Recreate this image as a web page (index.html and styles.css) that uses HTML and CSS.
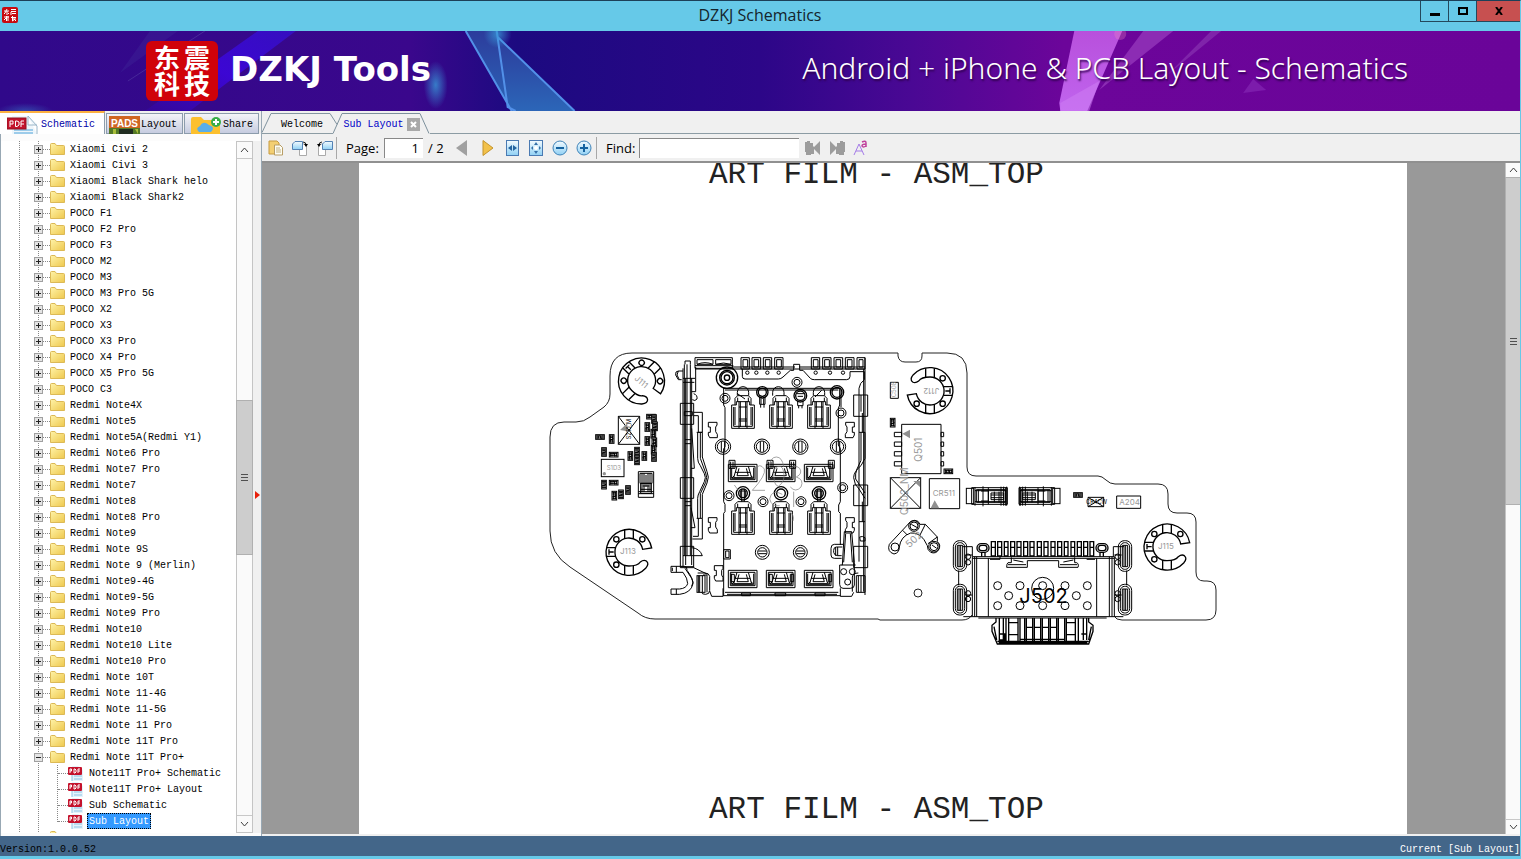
FILE: index.html
```html
<!DOCTYPE html>
<html lang="en">
<head>
    <meta charset="UTF-8">
    <meta name="viewport" content="width=device-width, initial-scale=1.0">
    <title>DZKJ Schematics</title>
    <link rel="stylesheet" href="styles.css">
</head>
<body>

<!-- shared icons -->
<svg class="defs" aria-hidden="true">
    <defs>
        <linearGradient id="gold" x1="0" y1="0" x2="1" y2="1">
            <stop offset="0" stop-color="#fff3a8"/><stop offset="1" stop-color="#eec84e"/>
        </linearGradient>
        <linearGradient id="sky" x1="0" y1="0" x2="0" y2="1">
            <stop offset="0" stop-color="#f4fbff"/><stop offset="1" stop-color="#8fd0f4"/>
        </linearGradient>
    </defs>
    <symbol id="folder" viewBox="0 0 15 12">
        <path d="M.5 11.500V1.500Q.5.500 1.500.500H5L6.500 2.500H13.500Q14.500 2.500 14.500 3.500V11.500Z" fill="url(#gold)" stroke="#dcb956"/>
    </symbol>
    <symbol id="pdf" viewBox="0 0 16 15">
        <path d="M4 0H10L15 4V15H4Z" fill="#e4f2fb"/>
        <path d="M4 9V15M6 10H14M6 13H14" stroke="#8cc4e4"/>
        <rect y="1" width="14" height="8" rx="1" fill="#c4122c"/>
        <path d="M2 7V3H3.500V5H2M6 3H7L8 4V6L7 7H6ZM10 7V3H12M10 5H12" fill="none" stroke="#fff"/>
    </symbol>
</svg>

<div class="window">
    <div class="titlebar">
        <svg class="app-icon" viewBox="0 0 16 16">
            <rect width="16" height="16" rx="2" fill="#c80a10"/>
            <path d="M2 4H7M5 2L3 6M5 4V8M2 7L3 6M7 7L6 6M9 2.500H14M9 4.500H14M10 6.500H14M9 8V5M2 10H7M4.500 9V14M2 13L4 11M6 9V14M9 10.500H14M10.500 9V14M11 12H14M13 12L10.500 14M12 12L14 14" stroke="#fff" fill="none"/>
        </svg>
        <h1>DZKJ Schematics</h1>
        <div class="window-buttons">
            <button type="button" aria-label="Minimize"><svg width="10" height="10"><path d="M0 7H10V10H0Z"/></svg></button>
            <button type="button" aria-label="Maximize"><svg width="10" height="8"><path d="M1 1H9V7H1Z" fill="none" stroke="#000" stroke-width="2"/></svg></button>
            <button type="button" class="close" aria-label="Close"><svg width="10" height="8"><path d="M2 0L8 8M8 0L2 8" stroke="#000" stroke-width="2"/></svg></button>
        </div>
    </div>

    <header class="banner">
        <svg class="banner-art" viewBox="0 0 1521 80" preserveAspectRatio="none" aria-hidden="true">
            <defs>
                <linearGradient id="base">
                    <stop offset="0" stop-color="#30098a"/><stop offset=".27" stop-color="#3a078c"/>
                    <stop offset=".34" stop-color="#1c0a80"/><stop offset=".5" stop-color="#2c0688"/>
                    <stop offset=".6" stop-color="#4a0894"/><stop offset=".7" stop-color="#6c059a"/>
                    <stop offset="1" stop-color="#6a0499"/>
                </linearGradient>
                <linearGradient id="beam" x1="1" y1="0" x2="0" y2="1">
                    <stop offset="0" stop-color="#3510c8"/><stop offset=".5" stop-color="#3d06e0"/><stop offset="1" stop-color="#34089a"/>
                </linearGradient>
                <linearGradient id="glass" x1="0" y1="0" x2="0" y2="1">
                    <stop offset="0" stop-color="#2c3c9c"/><stop offset="1" stop-color="#2c66b8"/>
                </linearGradient>
                <linearGradient id="pink" x1="0" y1="0" x2="0" y2="1">
                    <stop offset="0" stop-color="#b850dc"/><stop offset="1" stop-color="#c064ee"/>
                </linearGradient>
                <radialGradient id="glow">
                    <stop offset="0" stop-color="#3898d8" stop-opacity=".8"/><stop offset="1" stop-color="#3898d8" stop-opacity="0"/>
                </radialGradient>
            </defs>
            <rect width="1521" height="80" fill="url(#base)"/>
            <path d="M258 0H296L190 80H145Z" fill="url(#beam)" opacity=".85"/>
            <path d="M150 0H178L120 42Z" fill="#44389e" opacity=".25"/>
            <path d="M205 0L128 50" stroke="#5a48a8" opacity=".5"/>
            <ellipse cx="436" cy="54" rx="12" ry="24" fill="url(#glow)"/>
            <ellipse cx="25" cy="80" rx="28" ry="8" fill="url(#glow)" opacity=".5"/>
            <path d="M466 0H498L508 76L512 80Z" fill="url(#glass)"/>
            <path d="M498 6L575 80H512L508 76Z" fill="url(#glass)"/>
            <path d="M466 0L512 80M497 0L508 76L516 80M498 6L575 80" fill="none" stroke="#5290e8" stroke-width="2"/>
            <circle cx="498" cy="3" r="14" fill="url(#glow)"/>
            <path d="M1075 0H1123L1088 80H1061L1060 72Z" fill="url(#pink)"/>
            <path d="M1061 72L1100 50L1090 80H1061Z" fill="#d080f4" opacity=".5"/>
            <path d="M1144 0H1174L1100 59Z" fill="#8c2cb4"/>
            <path d="M1212 0H1222L1168 44Z" fill="#842cae" opacity=".8"/>
            <path d="M1244 62L1254 48L1267 59Z" fill="#7c1cab"/>
            <circle cx="1121" cy="3" r="6" fill="#f088c0" opacity=".3"/>
        </svg>
        <svg class="brand-logo" viewBox="0 0 72 60">
            <rect width="72" height="60" rx="6" fill="#d0020a"/>
            <text x="8" y="27">东</text><text x="38" y="27">震</text>
            <text x="8" y="53">科</text><text x="38" y="53">技</text>
        </svg>
        <span class="brand-name">DZKJ Tools</span>
        <span class="tagline">Android + iPhone &amp; PCB Layout - Schematics</span>
    </header>

    <main class="main">
        <aside class="sidebar">
            <nav class="side-tabs">
                <button type="button" class="side-tab active">
                    <svg width="34" height="18" viewBox="0 0 34 18">
                        <path d="M5 0H21L30 8V18H5Z" fill="#eef6fb"/><path d="M21 0L30 10V18M21 0V9H30" fill="#fff" stroke="#9ab6c8"/>
                        <path d="M7 14H26M7 17H26" stroke="#9dccea" stroke-width="2"/>
                        <rect y="2" width="19" height="11" fill="#c4122c" stroke="#901020"/>
                        <path d="M3 11V5H6V8H3M8.500 5H10L12 6V9L10 10.500H8.500ZM14 11V5H17M14 8H17" fill="none" stroke="#fff"/>
                    </svg>Schematic</button>
                <button type="button" class="side-tab">
                    <svg width="32" height="18" viewBox="0 0 32 18">
                        <rect width="31" height="18" fill="#cf6622"/><path d="M0 12H31V18H0Z" fill="#547a26"/>
                        <path d="M10 13H24V18H10Z" fill="#202c20"/><path d="M4 13H7V18H4M26 13H29V18" fill="#a7bd3a"/>
                        <text class="pads" x="2" y="11">PADS</text>
                    </svg>Layout</button>
                <button type="button" class="side-tab">
                    <svg width="34" height="18" viewBox="0 0 34 18">
                        <path d="M2 18V3Q2 1 4 1H12L15 4H28Q31 4 31 7V18Z" fill="#fcc02e"/>
                        <path d="M10 16Q6 12 11 10Q14 4 20 9Q27 11 22 16Z" fill="#5aaee8"/>
                        <circle cx="27" cy="6" r="5" fill="#38ad48"/><path d="M24 6H30M27 3V9" stroke="#fff" stroke-width="2"/>
                    </svg>Share</button>
            </nav>
            <div class="tree-wrap">
                <ul class="tree" id="tree"></ul>
                <div class="scrollbar tree-scroll">
                    <button type="button" aria-label="Scroll up"><svg width="9" height="6"><path d="M1 5L4.500 1L8 5"/></svg></button>
                    <div class="track"><div class="thumb"><i></i></div></div>
                    <button type="button" aria-label="Scroll down"><svg width="9" height="6"><path d="M1 1L4.500 5L8 1"/></svg></button>
                </div>
                <div class="splitter"><svg width="5" height="8"><path d="M0 0L5 4L0 8Z" fill="#e8200c"/></svg></div>
            </div>
        </aside>

        <section class="content">
            <nav class="doc-tabs">
                <button type="button" class="doc-tab">
                    <svg class="tab-shape" viewBox="0 0 76 21" preserveAspectRatio="none"><path d="M0 20.500L9 .500H68L75 12"/></svg>Welcome
                </button>
                <div class="doc-tab current">
                    <svg class="tab-shape" viewBox="0 0 97 21" preserveAspectRatio="none"><path d="M0 20.500L9 .500H87L96 20.500"/></svg>
                    <button type="button">Sub Layout</button>
                    <button type="button" class="tab-close" aria-label="Close tab"><svg width="7" height="7"><path d="M1 1L6 6M6 1L1 6" stroke="#fff" stroke-width="2"/></svg></button>
                </div>
            </nav>

            <div class="toolbar">
                <button type="button" aria-label="Open"><svg width="16" height="16"><path d="M1 1H9L11 3V14H1Z" fill="#f3cf72" stroke="#c79b40"/><path d="M6.500 5H12L14.500 7.500V15H6.500Z" fill="#fdfdf4" stroke="#b89d66"/><path d="M8 8H12M8 10H13M8 12H13" stroke="#c0b080"/></svg></button>
                <button type="button" aria-label="Rotate right"><svg width="17" height="16"><path d="M8 4H14.500V15.500H7.500V9" fill="#fff" stroke="#aaa"/><path d="M3 1.500H10.500V9.500H.5V4Z" fill="url(#sky)" stroke="#5482b4"/><path d="M11 2Q14 2 14 5" fill="none" stroke="#222"/><path d="M12 4H16L14 7Z"/></svg></button>
                <button type="button" aria-label="Rotate left"><svg width="17" height="16"><path d="M9 4H2.500V15.500H9.500V9" fill="#fff" stroke="#aaa"/><path d="M9 1.500H16.500V9.500H6.500V4Z" fill="url(#sky)" stroke="#5482b4"/><path d="M6 2Q3 2 3 5" fill="none" stroke="#222"/><path d="M1 4H5L3 7Z"/></svg></button>
                <span class="sep"></span>
                <label class="page-label" for="page">Page:</label>
                <input type="text" id="page" class="page-input" value="1">
                <span class="page-total">/ 2</span>
                <button type="button" aria-label="Previous page"><svg width="12" height="16"><path d="M11 0V16L0 8Z" fill="#a0a0a0"/></svg></button>
                <button type="button" class="next" aria-label="Next page"><svg width="12" height="16"><path d="M1 .500V15.500L11 8Z" fill="#f2c14a" stroke="#c4942c"/></svg></button>
                <button type="button" aria-label="Fit width"><svg width="13" height="16"><rect x=".5" y=".5" width="12" height="15" fill="url(#sky)" stroke="#4a7ab2"/><path d="M6 5V11L2 8ZM7 5V11L11 8Z" fill="#2464a0"/></svg></button>
                <button type="button" aria-label="Fit page"><svg width="14" height="16"><rect x=".5" y=".5" width="13" height="15" fill="url(#sky)" stroke="#4a7ab2"/><path d="M7 2L9 5H5ZM7 14L9 11H5ZM2 8L4 6V10ZM12 8L10 6V10Z" fill="#3470a8"/><circle cx="7" cy="8" r="2" fill="#fff"/></svg></button>
                <button type="button" aria-label="Zoom out"><svg width="16" height="16"><circle cx="8" cy="8" r="7" fill="url(#sky)" stroke="#3f83b8"/><path d="M4 8H12" stroke="#1663a0" stroke-width="2"/></svg></button>
                <button type="button" aria-label="Zoom in"><svg width="16" height="16"><circle cx="8" cy="8" r="7" fill="url(#sky)" stroke="#3f83b8"/><path d="M4 8H12M8 4V12" stroke="#1663a0" stroke-width="2"/></svg></button>
                <span class="sep"></span>
                <label class="find-label" for="find">Find:</label>
                <input type="text" id="find" class="find-input">
                <button type="button" class="next" aria-label="Find previous"><svg width="16" height="16"><path d="M0 2H2V1H5V3H8V6L9 7L15 1V15L9 9V14H6V15H1V12H0Z" fill="#9c9c9c"/></svg></button>
                <button type="button" aria-label="Find next"><svg width="16" height="16"><path d="M16 2H14V1H11V3H8V6L7 7L1 1V15L7 9V14H10V15H15V12H16Z" fill="#9c9c9c"/></svg></button>
                <button type="button" aria-label="Match case"><svg width="16" height="16"><path d="M1 15L6 4L11 15M3 11H9" fill="none" stroke="#a57ce8" stroke-width="1"/><path d="M9 2Q13 0 13 3V7M13 4Q9 4 9 6Q10 8 13 6" fill="none" stroke="#c0409c" stroke-width="1.500"/></svg></button>
            </div>

            <div class="viewer">
                <div class="canvas">
                    <!-- drawing units: one per page pixel; parts use a grid three times finer -->
                    <svg class="sheet" viewBox="359 163 1048 671" preserveAspectRatio="xMidYMid slice">
                        <defs>
                            <g id="ring">
                                <path d="M68 -12A69 69 0 1 0 50 49Q62 35 52 27Q44 22 34 30Q26 42 0 42A42 42 0 1 1 41 -8Z"/>
                                <path d="M-13 -68V-40M13 -68V-40M-13 68V40M13 68V40M-67 -13H-41M-67 13H-41M-60 -8V8M-60 0H-46"/>
                                <circle cx="-38" cy="-38" r="8"/><circle cx="40" cy="-38" r="8"/><circle cx="-38" cy="38" r="8"/>
                            </g>
                            <g id="clip">
                                <path d="M0 10H14V0H54V10H68V80H0ZM6 16V74H62V16M10 16V70M58 16V70M22 0V80M26 0V76M46 0V80M42 0V76M22 16H46M22 52H46M22 58H46"/>
                                <path d="M10 10V-10L18 -18H50L58 -10V10M18 0V-12M50 0V-12"/>
                            </g>
                            <g id="tray">
                                <path d="M0 0H86V52H0ZM6 6H80V46H6ZM10 10V42H76V10M26 6L16 40H70L60 6M32 12L26 34H60L54 12M10 42L18 34M76 42L68 34M20 24H66" />
                            </g>
                            <g id="pad"><circle r="23"/><circle r="17"/><path d="M-5 -15V15M5 -15V15"/></g>
                            <g id="eye"><circle r="15"/><circle r="9"/></g>
                            <g id="chip"><rect width="26" height="14"/><path d="M4 1V13M8 2V12M12 1L17 13M16 2V12M22 1V13M2 4H24M2 10H24"/></g>
                            <g id="slot"><rect width="40" height="92" rx="18"/><rect x="6" y="6" width="28" height="80" rx="13"/><path d="M12 14H28V78H12ZM17 14V78M22 14V78"/></g>
                            <g id="diode"><rect width="22" height="46"/><path d="M16 -2H123V48H16ZM26 -4V52M30 4H117V42H30ZM36 4V42M44 8H66V38H44M50 -6V54M66 -2V48M74 14H112V34H74ZM74 20H112M74 28H112M84 10V42M104 -5V52M98 10V42M112 -5V52M118 -2V52M121 -5V52M26 7H120M26 40H120"/></g>
                        </defs>

                        <g class="film">
                            <text x="709" y="183">ART FILM - ASM_TOP</text>
                            <text x="709" y="818">ART FILM - ASM_TOP</text>
                        </g>

                        <path class="outline" d="M972 615Q969 620 962 620H880L878 619H655Q645 619 638 613L570 567Q550 554 550 531V437Q550 422 564 422H576Q584 422 590 417L604 407Q610 402 610 394V376Q610 353 632 353H898V356Q899 362 905 362H916Q922 362 922 356V353H947Q967 353 967 373V467Q967 476 976 476H1098Q1102 476 1106 480Q1110 484 1115 484H1158Q1168 484 1168 494V504Q1168 513 1177 513H1187Q1196 513 1196 522V572Q1196 581 1204 581H1207Q1216 581 1216 590V610Q1216 620 1206 620H1122Q1116 620 1114 616"/>

                        <!-- left part of the board -->
                        <svg x="540" y="340" width="180" height="290" viewBox="0 0 540 870">
                            <g class="line bold">
                                <use href="#ring" transform="translate(305 122) rotate(45)"/>
                                <use href="#ring" transform="translate(267 636)"/>
                            </g>
                            <g class="line">
                                <path d="M235 229H299V313H235ZM235 229L299 313M299 229L235 313"/>
                                <rect x="184" y="358" width="68" height="52"/>
                                <path d="M295 395H341V472H295ZM300 400H336V430H300ZM306 400V456M312 400V456M318 405V440M324 400V456M330 400V456M302 430H334V460H302ZM302 448H334M295 455H341M295 461H341M308 438H328"/>
                            </g>
                            <path class="tint" d="M240 270L262 250V274Z"/><circle class="tint" cx="193" cy="401" r="5"/>
                            <g class="chips">
                                <use href="#chip" x="167" y="284"/><use href="#chip" x="208" y="337"/><use href="#chip" x="208" y="421"/><use href="#chip" x="320" y="223"/>
                                <use href="#chip" transform="translate(222 284) rotate(90)"/><use href="#chip" transform="translate(199 323) rotate(90)"/>
                                <use href="#chip" transform="translate(199 421) rotate(90)"/><use href="#chip" transform="translate(230 454) rotate(90)"/>
                                <use href="#chip" transform="translate(250 450) rotate(90)"/><use href="#chip" transform="translate(271 437) rotate(90)"/>
                                <use href="#chip" transform="translate(329 248) rotate(90)"/><use href="#chip" transform="translate(329 290) rotate(90)"/>
                                <use href="#chip" transform="translate(278 335) rotate(90)"/><use href="#chip" transform="translate(320 335) rotate(90)"/>
                                <use href="#chip" transform="translate(349 224) rotate(90)"/><use href="#chip" transform="translate(352 246) rotate(90)"/>
                                <use href="#chip" transform="translate(347 268) rotate(90)"/><use href="#chip" transform="translate(350 294) rotate(90)"/>
                                <use href="#chip" transform="translate(348 316) rotate(90)"/><use href="#chip" transform="translate(349 338) rotate(90)"/>
                                <use href="#chip" transform="translate(298 322) rotate(90)"/><use href="#chip" transform="translate(298 348) rotate(90)"/>
                            </g>
                            <g class="mark">
                                <text x="282" y="118" transform="rotate(40 282 118)">J111</text>
                                <text x="240" y="643">J113</text>
                                <text x="200" y="391" class="tiny">S1D3</text>
                            </g>
                            <text class="ink" x="272" y="298" transform="rotate(-90 272 298)">S210_M</text>
                        </svg>

                        <!-- card connector -->
                        <svg x="665" y="345" width="220" height="260" viewBox="0 0 660 780">
                            <g class="line">
                                <path d="M60 58V48H76V58M54 70V665M58 58V632M62 100V660M66 58V632M76 58V632M80 100V660M92 66V140H80M46 665H86M54 78H40Q30 78 32 90L40 104H50M40 78L36 90L42 102M86 146Q98 150 96 162Q90 170 82 164M54 100H90M54 112H88M54 632H80L112 632Q104 610 80 608"/>
                                <path d="M46 175H86V238H46ZM46 398H86V460H46ZM46 604H86V668H46ZM58 200H82V212H58ZM80 250L88 370H78M78 488L90 548H78M60 284H78M60 296H78M60 470H78M60 482H78"/>
                                <path d="M86 202H112V262H100V212H86M98 262V340Q98 352 106 362L118 386Q124 398 118 410L104 440Q98 450 98 460V520M112 262V336L126 380Q134 396 126 414L112 448V520M106 262V340L122 384Q128 396 122 412L106 446V520M95 262H112M95 520H112V582H82M100 520V574H84"/>
                                <path d="M90 38H202V70H90ZM96 44H144V58H96ZM152 44H198V58H152ZM96 58Q120 48 144 58M152 58Q176 50 198 58M90 72H600M90 62H205M200 66H390M402 66H600"/>
                                <path d="M228 38H253V72H228ZM234 44H248V66H234ZM261 38H287V72H261ZM267 44H281V66H267ZM295 38H320V72H295ZM301 44H315V66H301ZM329 38H354V72H329ZM335 44H349V66H335ZM439 38H464V72H439ZM445 44H459V66H445ZM473 38H498V72H473ZM479 44H493V66H479ZM507 38H533V72H507ZM513 44H527V66H513ZM541 38H567V72H541ZM547 44H561V66H547ZM576 38H600V72H576ZM582 44H594V66H582Z"/>
                                <path d="M232 72V94Q232 102 240 102H340Q348 102 354 96L376 76H386V58H404V76H414L436 100Q440 104 448 104H545Q555 104 555 94V80H598V104Q584 114 582 130V650M174 130H526M180 135H520M176 130V180L180 188V305L176 312V470L180 478V500L176 505V752M524 130V180L520 190V300L526 310V470L521 480V500L526 505V600M528 135V186M174 752H526M180 742H520M186 748H516M174 730V754M526 730V754"/>
                                <circle cx="247" cy="83" r="5"/><circle cx="274" cy="83" r="5"/><circle cx="307" cy="83" r="5"/><circle cx="341" cy="83" r="5"/><circle cx="452" cy="83" r="5"/><circle cx="495" cy="83" r="5"/><circle cx="534" cy="83" r="5"/>
                                <use href="#eye" x="396" y="112"/><use href="#eye" x="180" y="160"/><use href="#eye" x="528" y="204"/><use href="#eye" x="192" y="452"/><use href="#eye" x="294" y="470"/><use href="#eye" x="408" y="470"/><use href="#eye" x="533" y="428"/>
                                <path d="M217 152V142A17 17 0 0 1 251 142V152M323 152V142A17 17 0 0 1 357 142V152M445 152V142A17 17 0 0 1 479 142V152"/>
                                <path d="M284 156V178H300V156M287 178V188M297 178V188M288 160V178M296 160V178M398 166V182H414V166M401 182V190M411 182V190M395 146H417M398 154H414M216 145L240 162M470 136L450 156"/>
                                <path d="M226 438H242V458H226ZM454 438H470V458H454ZM230 435V470M238 435V470M458 435V470M466 435V470"/>
                                <use href="#clip" x="200" y="170"/><use href="#clip" x="314" y="170"/><use href="#clip" x="428" y="170"/>
                                <use href="#clip" x="200" y="488"/><use href="#clip" x="314" y="488"/><use href="#clip" x="428" y="488"/>
                                <use href="#tray" x="190" y="358"/><use href="#tray" x="304" y="358"/><use href="#tray" x="418" y="358"/>
                                <use href="#tray" x="190" y="676"/><use href="#tray" x="304" y="676"/><use href="#tray" x="418" y="676"/>
                                <path d="M192 346H210V370H192ZM197 350V370M204 350V370M306 346H324V370H306ZM311 350V370M318 350V370M374 346H392V370H374ZM379 350V370M386 350V370M490 346H508V370H490ZM495 350V370M502 350V370M198 688H208V710H198ZM312 688H322V710H312ZM376 688H386V710H376ZM490 688H500V710H490Z"/>
                                <use href="#pad" x="174" y="305"/><use href="#pad" x="291" y="305"/><use href="#pad" x="406" y="305"/><use href="#pad" x="519" y="305"/>
                                <circle cx="292" cy="622" r="21"/><circle cx="292" cy="622" r="14"/><circle cx="406" cy="622" r="21"/><circle cx="406" cy="622" r="14"/><path d="M280 618H304M280 626H304M394 618H418M394 626H418"/>
                                <path d="M130 232H156V240L152 246V260L157 268V278H134L130 270V262H136V246H130ZM130 518H156V526L152 532V546L157 554V564H134L130 556V548H136V532H130ZM148 662H174V670L170 676V690L174 698V708H152L148 700V692H154V676H148ZM568 232H542V240L546 246V260L541 268V278H564L568 270V262H562V246H568ZM568 518H542V526L546 532V546L541 554V564H564L568 556V548H562V532H568Z"/>
                                <path d="M176 614H196V642H176ZM182 618H192V638H182ZM230 744H256V752H230ZM330 744H362V752H330ZM450 744H480V752H450Z"/>
                                <path d="M600 38V750M596 72V740M588 150V200M592 204V262M582 262H600V340L588 362Q566 380 566 398Q568 420 582 432L600 460M588 262V346L576 372Q570 386 572 402L600 444M592 470V530M582 530H600M584 576Q592 572 600 578V588H586ZM566 150H608V214H566ZM566 420H608V482H566ZM566 604H608V668H566Z"/>
                                <path d="M538 560H560L568 652V720Q568 730 556 730H534Q524 730 524 718V660H532ZM542 566L536 652M556 566L562 652M530 660H572M534 598H508Q498 598 498 610V630Q498 640 508 640H530M532 606H514Q506 606 506 616V622Q508 632 518 632H530M512 606V632M518 606V632"/>
                                <circle cx="536" cy="680" r="9"/><circle cx="562" cy="680" r="9"/><circle cx="548" cy="711" r="9"/>
                                <rect x="96" y="692" width="24" height="50"/><path d="M100 692V742M104 692V742M112 692V742M110 742Q110 748 122 748Q134 748 134 736V694Q132 684 120 684H98M114 690H126V742M574 692H600V742H574ZM580 692V742M588 692V742M562 740V696Q564 684 580 684M134 738L140 754H174M526 754H560L566 742"/>
                                <path d="M18 664H58Q66 664 66 674V676Q84 700 84 716Q78 744 44 748H18V732H44Q64 730 68 716Q68 700 54 682H18ZM34 664V682M34 732V748M22 668V678M60 670L80 700Q88 712 80 724M86 668L128 688"/>
                            </g>
                            <g class="line bold">
                                <circle cx="186" cy="98" r="32"/><circle cx="186" cy="98" r="22"/><circle cx="186" cy="98" r="18"/><circle cx="186" cy="98" r="8"/>
                                <circle cx="516" cy="142" r="20"/><circle cx="516" cy="142" r="15"/><circle cx="292" cy="142" r="17"/><circle cx="292" cy="142" r="12"/><circle cx="406" cy="152" r="19"/><circle cx="406" cy="152" r="14"/>
                                <circle cx="234" cy="445" r="20"/><circle cx="234" cy="445" r="13"/><circle cx="348" cy="445" r="20"/><circle cx="348" cy="445" r="13"/><circle cx="462" cy="445" r="20"/><circle cx="462" cy="445" r="13"/>
                            </g>
                            <path class="ghost" d="M272 372Q284 352 298 372Q304 390 262 436H300M312 366Q316 336 334 336Q352 336 356 366M374 372Q388 356 404 370Q414 386 394 396Q418 404 408 426Q392 444 376 426M328 372Q350 352 356 380Q362 410 340 424Q322 420 328 372M352 448Q320 430 314 462Q320 486 344 482M386 440V486M372 500Q390 510 384 528M208 420L220 436"/>
                        </svg>

                        <!-- power stage -->
                        <svg x="870" y="345" width="200" height="220" viewBox="0 0 600 660">
                            <use class="line bold" href="#ring" transform="translate(180 138) rotate(180)"/>
                            <g class="line">
                                <path d="M61 112H85V160H61ZM95 238H213V386H95ZM73 262H95V275H73ZM73 291H95V304H73ZM73 320H95V333H73ZM73 350H95V363H73ZM213 262H221V275H213ZM213 291H221V304H213ZM213 320H221V333H213ZM213 350H221V363H213Z"/>
                                <path d="M61 398H152V490H61ZM61 398L152 490M152 398L61 490M178 401H269V491H178Z"/>
                                <path d="M58 598L112 540Q120 526 134 526Q146 526 150 538H166L202 576V590Q214 600 206 614Q198 628 182 622Q172 616 172 602L162 584Q146 562 122 564Q92 574 88 606Q88 624 72 627Q50 620 58 598ZM98 556L112 570M166 538L150 570M202 576L174 596"/>
                                <circle cx="75" cy="606" r="12"/>
                                <path d="M124 538L142 548M186 600L200 610"/>
                                <circle cx="132" cy="543" r="12"/><circle cx="132" cy="543" r="16"/><circle cx="192" cy="605" r="12"/><circle cx="192" cy="605" r="16"/>
                                <use href="#diode" x="289" y="430"/>
                                <use href="#diode" transform="translate(570 430) scale(-1 1)"/>
                            </g>
                            <path class="tint" d="M97 266L120 254V280ZM182 490L194 466L208 490ZM130 408H150V426Z"/>
                            <g class="chips"><use href="#chip" x="222" y="372"/><use href="#chip" transform="translate(75 220) rotate(90)"/></g>
                            <g class="mark">
                                <text x="208" y="130" transform="rotate(180 208 130)">J112</text>
                                <text x="188" y="454">CR511</text>
                                <text class="large" x="157" y="350" transform="rotate(-90 157 350)">Q501</text>
                                <text class="large" x="114" y="510" transform="rotate(-90 114 510)">Q502_NM</text>
                                <text class="large" x="118" y="610" transform="rotate(-42 118 610)">502</text>
                                <text class="tiny" x="79" y="157" transform="rotate(-90 79 157)">C508</text>
                            </g>
                        </svg>

                        <!-- test point under the power stage -->
                        <circle class="outline" cx="918" cy="593" r="4"/>

                        <!-- USB connector -->
                        <svg x="940" y="460" width="290" height="200" viewBox="0 0 870 600">
                            <use class="line bold" href="#ring" transform="translate(681 260)"/>
                            <g class="line">
                                <use href="#slot" x="40" y="242"/><use href="#slot" x="40" y="373"/><use href="#slot" x="535" y="242"/><use href="#slot" x="535" y="373"/>
                                <path d="M97 290H523V470H97ZM97 295H523M104 290V470M110 290V470M145 294V470M470 294V470M508 290V470M516 290V470M115 474H500M97 290V260H68M520 290V260H552M70 470H97M523 470H550M56 332V376M560 332V376M76 285H97M76 405H97M523 285H545M523 405H545"/>
                                <circle cx="84" cy="290" r="8"/><circle cx="84" cy="307" r="8"/><circle cx="84" cy="400" r="8"/><circle cx="84" cy="417" r="8"/><circle cx="533" cy="290" r="8"/><circle cx="533" cy="307" r="8"/><circle cx="533" cy="400" r="8"/><circle cx="533" cy="417" r="8"/>
                                <path d="M214 292V308H204Q200 310 200 322H262V302H356V322H414Q418 312 410 308H404V292M204 314H258M360 314H412M220 300L250 306M370 306L400 300M150 298H180V290M440 298H465"/>
                                <circle cx="173" cy="377" r="12"/><circle cx="240" cy="377" r="12"/><circle cx="308" cy="377" r="12"/><circle cx="375" cy="377" r="12"/><circle cx="442" cy="377" r="12"/><circle cx="206" cy="407" r="12"/><circle cx="409" cy="407" r="12"/><circle cx="173" cy="437" r="12"/><circle cx="240" cy="437" r="12"/><circle cx="308" cy="437" r="12"/><circle cx="375" cy="437" r="12"/><circle cx="442" cy="437" r="12"/><circle cx="308" cy="385" r="33"/>
                                <path d="M530 108H602V145H530ZM444 112H491V140H444ZM444 112L491 140M491 112L444 140"/>
                            </g>
                            <g class="line bold">
                                <rect x="111" y="251" width="36" height="26" rx="13"/><rect x="117" y="256" width="24" height="16" rx="8"/><rect x="468" y="251" width="36" height="26" rx="13"/><rect x="474" y="256" width="24" height="16" rx="8"/>
                                <path d="M154 245H166V288H154ZM173 245H185V288H173ZM193 245H204V288H193ZM212 245H224V288H212ZM231 245H243V288H231ZM251 245H263V288H251ZM270 245H282V288H270ZM292 245H304V288H292ZM312 245H324V288H312ZM333 245H345V288H333ZM353 245H365V288H353ZM373 245H384V288H373ZM393 245H404V288H393ZM412 245H424V288H412ZM431 245H443V288H431ZM450 245H461V288H450ZM154 262H166M173 262H185M193 262H204M212 262H224M231 262H243M251 262H263M270 262H282M292 262H304M312 262H324M333 262H345M353 262H365M373 262H384M393 262H404M412 262H424M431 262H443M450 262H461M125 277V290M135 277V290M480 277V290M490 277V290"/>
                                <path d="M168 474V486L156 496V514L172 552H446L459 514V496L446 486V474M172 544H446M176 548H442M178 474V540M190 474V540M176 540H194V522H178M430 540V474M440 540V474M424 522H442M162 500L170 540M454 500L446 540M198 474V544M206 474V544M234 474V544M240 474V544M254 474V544M259 474V544M278 474V544M283 474V544M302 474V544M307 474V544M326 474V544M331 474V544M350 474V544M355 474V544M374 474V544M379 474V544M406 474V544M415 474V544M206 524H234M206 488H234M259 502H278M283 502H302M307 502H326M331 502H350M379 524H406M379 488H406M240 538H374"/>
                            </g>
                            <g class="chips"><use href="#chip" x="401" y="98"/></g>
                            <text class="ink" x="438" y="132">CR4CW</text>
                            <g class="mark">
                                <text x="538" y="134">A204</text>
                                <text x="654" y="268">J115</text>
                            </g>
                            <text class="part" x="238" y="430">J502</text>
                        </svg>
                    </svg>
                </div>
                <div class="scrollbar view-scroll">
                    <button type="button" aria-label="Scroll up"><svg width="9" height="6"><path d="M1 5L4.500 1L8 5"/></svg></button>
                    <div class="track"><div class="thumb"><i></i></div></div>
                    <button type="button" aria-label="Scroll down"><svg width="9" height="6"><path d="M1 1L4.500 5L8 1"/></svg></button>
                </div>
            </div>
        </section>
    </main>

    <footer class="statusbar">
        <span>Version:1.0.0.52</span>
        <span class="current-file">Current [Sub Layout]</span>
    </footer>
</div>

<script>
    const models = [
        'Xiaomi Civi 2', 'Xiaomi Civi 3', 'Xiaomi Black Shark helo', 'Xiaomi Black Shark2',
        'POCO F1', 'POCO F2 Pro', 'POCO F3', 'POCO M2', 'POCO M3', 'POCO M3 Pro 5G',
        'POCO X2', 'POCO X3', 'POCO X3 Pro', 'POCO X4 Pro', 'POCO X5 Pro 5G', 'POCO C3',
        'Redmi Note4X', 'Redmi Note5', 'Redmi Note5A(Redmi Y1)', 'Redmi Note6 Pro',
        'Redmi Note7 Pro', 'Redmi Note7', 'Redmi Note8', 'Redmi Note8 Pro', 'Redmi Note9',
        'Redmi Note 9S', 'Redmi Note 9 (Merlin)', 'Redmi Note9-4G', 'Redmi Note9-5G',
        'Redmi Note9 Pro', 'Redmi Note10', 'Redmi Note10 Lite', 'Redmi Note10 Pro',
        'Redmi Note 10T', 'Redmi Note 11-4G', 'Redmi Note 11-5G', 'Redmi Note 11 Pro',
        'Redmi Note 11T Pro', 'Redmi Note 11T Pro+'
    ];
    const files = ['Note11T Pro+ Schematic', 'Note11T Pro+ Layout', 'Sub Schematic', 'Sub Layout'];
    const openModel = 'Redmi Note 11T Pro+';
    const selectedFile = 'Sub Layout';

    function fileRow(name) {
        return `
            <li class="row file">
                <span class="dots"></span>
                <svg class="pdf-icon"><use href="#pdf"/></svg>
                <button type="button" class="label${name === selectedFile ? ' selected' : ''}">${name}</button>
            </li>
        `;
    }

    function modelRow(name) {
        const open = name === openModel;
        return `
            <li>
                <div class="row">
                    <button type="button" class="expander" aria-label="${open ? 'Collapse' : 'Expand'}">
                        <svg width="9" height="9"><path d="M2 4.500H7${open ? '' : 'M4.500 2V7'}" stroke="#222"/></svg>
                    </button>
                    <span class="dots"></span>
                    <svg class="folder-icon"><use href="#folder"/></svg>
                    <button type="button" class="label">${name}</button>
                </div>
                ${open ? `<ul class="files">${files.map(fileRow).join('')}</ul>` : ''}
            </li>
        `;
    }

    document.getElementById('tree').innerHTML = models.map(modelRow).join('') +
        '<li class="row next-row"><svg class="folder-icon"><use href="#folder"/></svg></li>';
</script>

</body>
</html>
```
FILE: styles.css
```css
* {
    margin: 0;
    padding: 0;
    box-sizing: border-box;
}

body {
    font-family: "Liberation Mono", monospace;
    font-size: 10px;
    color: #000;
}

button {
    font: inherit;
    color: inherit;
    background: none;
    border: none;
    cursor: pointer;
}

ul {
    list-style: none;
}

svg {
    flex: none;
}

.defs {
    position: absolute;
    width: 0;
    height: 0;
}

.window {
    display: flex;
    flex-direction: column;
    height: 100vh;
    overflow: hidden;
    border-top: 1px solid #1c4058;
    border-right: 1px solid #66c9e8;
    border-bottom: 3px solid #66c9e8;
}

/* Title bar */
.titlebar {
    display: grid;
    grid-template-columns: 1fr auto 1fr;
    flex: none;
    height: 30px;
    background: #66c9e8;
}

.app-icon {
    width: 16px;
    height: 16px;
    margin: 6px 2px;
}

.titlebar h1 {
    font-family: "Open Sans", sans-serif;
    font-size: 16px;
    font-weight: 400;
    line-height: 29px;
    color: #14242c;
}

.window-buttons {
    display: flex;
    justify-content: flex-end;
    height: 21px;
}

.window-buttons button {
    display: flex;
    align-items: center;
    justify-content: center;
    width: 28px;
    border: 1px solid #24485c;
    border-top: none;
    border-right: none;
}

.window-buttons .close {
    width: 44px;
    background: #c75050;
}

/* Banner */
.banner {
    position: relative;
    display: flex;
    align-items: center;
    flex: none;
    height: 80px;
    padding: 0 112px 0 146px;
    color: #fff;
}

.banner-art {
    position: absolute;
    inset: 0;
    width: 100%;
    height: 100%;
}

.brand-logo {
    position: relative;
    width: 72px;
    height: 60px;
    overflow: visible;
    font: 700 26px "Noto Sans CJK SC", sans-serif;
    fill: #fff;
}

.brand-name {
    position: relative;
    margin-left: 12px;
    padding-bottom: 4px;
    font-family: "DejaVu Sans", sans-serif;
    font-size: 34px;
    font-weight: 700;
    white-space: nowrap;
}

.tagline {
    position: relative;
    margin-left: auto;
    padding-bottom: 8px;
    font-family: "Noto Sans", sans-serif;
    font-size: 30px;
    font-weight: 300;
    text-shadow: 1px 2px 2px #300050;
    white-space: nowrap;
}

/* Sidebar */
.main {
    display: flex;
    flex: 1;
    min-height: 0;
    background: #f0f0f0;
}

.sidebar {
    display: flex;
    flex-direction: column;
    flex: none;
    width: 261px;
}

.side-tabs {
    display: flex;
    align-items: flex-end;
    gap: 1px;
    height: 23px;
}

.side-tab {
    display: flex;
    align-items: center;
    width: 77px;
    height: 21px;
    padding: 2px 0 0 2px;
    border: 1px solid #8c9cac;
    background: linear-gradient(#f4f4f8, #c6cce0);
}

.side-tab:last-child {
    width: 75px;
    padding-left: 4px;
}

.side-tab.active {
    width: 105px;
    height: 23px;
    padding-left: 7px;
    border-top: 2px solid #fcb040;
    border-bottom: none;
    border-left: none;
    background: #fff;
    color: #0000a8;
}

.pads {
    font: 700 10px "Liberation Sans", sans-serif;
    fill: #fff;
}

.tree-wrap {
    display: flex;
    flex: 1;
    min-height: 0;
    padding: 7px 0 3px;
    border-left: 1px solid #98a8b4;
    background: #fcfcfc;
}

.tree {
    flex: 1;
    min-width: 0;
    overflow: hidden;
    background-color: #fff;
    background-image: repeating-linear-gradient(#888 0 1px, transparent 1px 2px), repeating-linear-gradient(#888 0 1px, transparent 1px 2px);
    background-position: 18px 0, 37px 0;
    background-size: 1px 100%;
    background-repeat: no-repeat;
}

.row {
    display: flex;
    align-items: center;
    height: 16px;
    padding-left: 33px;
}

.expander {
    display: flex;
    width: 9px;
    height: 9px;
    background: #e4e4e4;
    outline: 1px solid #a0a0a0;
    outline-offset: -1px;
}

.dots {
    width: 7px;
    border-top: 1px dotted #888;
}

.folder-icon {
    width: 15px;
    height: 12px;
}

.label {
    height: 16px;
    padding: 0 2px;
    margin-left: 3px;
    line-height: 18px;
    white-space: nowrap;
}

.label.selected {
    color: #fff;
    background: #3399ff;
    outline: 1px dotted #000;
    outline-offset: -1px;
}

.files {
    background: repeating-linear-gradient(#888 0 1px, transparent 1px 2px) 56px 0 / 1px 57px no-repeat;
}

.file {
    padding-left: 57px;
}

.file .dots {
    width: 10px;
}

.pdf-icon {
    width: 16px;
    height: 15px;
}

.next-row {
    padding-left: 49px;
}

.scrollbar {
    display: flex;
    flex-direction: column;
    flex: none;
    background: #fafafa;
    border: 1px solid #c4c4c4;
}

.scrollbar button {
    display: flex;
    align-items: center;
    justify-content: center;
    height: 16px;
}

.scrollbar path {
    fill: none;
    stroke: #404040;
    stroke-width: 1;
}

.track {
    flex: 1;
    border: solid #c8c8c8;
    border-width: 1px 0;
}

.thumb {
    display: flex;
    align-items: center;
    justify-content: center;
    background: #cdcdcd;
    outline: 1px solid #b0b0b0;
}

.thumb i {
    width: 7px;
    height: 7px;
    background: repeating-linear-gradient(#505050 0 1px, transparent 1px 3px);
}

.tree-scroll {
    width: 17px;
}

.tree-scroll .track {
    padding-top: 242px;
}

.tree-scroll .thumb {
    height: 153px;
}

.splitter {
    display: flex;
    align-items: center;
    width: 8px;
    padding: 16px 0 0 2px;
    background: #f0f0f0;
}

/* Document area */
.content {
    display: flex;
    flex-direction: column;
    flex: 1;
    min-width: 0;
    border-left: 1px solid #98a8b4;
}

.doc-tabs {
    display: flex;
    align-items: flex-end;
    height: 23px;
    border-bottom: 1px solid #8c9ca4;
}

.doc-tab {
    position: relative;
    display: flex;
    align-items: center;
    justify-content: center;
    width: 76px;
    height: 20px;
    padding: 2px 0 0 4px;
}

.doc-tab.current {
    width: 97px;
    height: 21px;
    gap: 3px;
    margin: 0 0 -1px -5px;
    padding: 2px 0 0;
    color: #0000c8;
    background: linear-gradient(#f0f0f0, #f0f0f0) bottom / 100% 1px no-repeat;
}

.doc-tab.current button {
    position: relative;
}

.tab-shape {
    position: absolute;
    inset: 0;
    width: 100%;
    height: 100%;
    fill: none;
    stroke: #7c909c;
}

.doc-tab .tab-close {
    display: flex;
    align-items: center;
    justify-content: center;
    width: 13px;
    height: 13px;
    background: #a8a8a8;
}

.toolbar {
    display: flex;
    align-items: center;
    height: 27px;
    padding-left: 2px;
    font-family: "Open Sans", sans-serif;
    font-size: 13px;
}

.toolbar button {
    display: flex;
    align-items: center;
    justify-content: center;
    width: 24px;
    height: 24px;
}

.toolbar .next {
    margin-left: 2px;
}

.sep {
    width: 1px;
    height: 22px;
    margin-right: 9px;
    background: #a8a8a8;
}

.page-label {
    width: 38px;
}

.toolbar input {
    height: 20px;
    padding: 0 4px;
    border: none;
    border-top: 1px solid #888;
    border-left: 1px solid #888;
    background: #fff;
    font: inherit;
}

.page-input {
    width: 39px;
    text-align: right;
}

.page-total {
    width: 27px;
    padding-left: 5px;
}

.find-label {
    width: 33px;
}

.find-input {
    width: 160px;
}

.viewer {
    display: flex;
    flex: 1;
    min-height: 0;
    margin-bottom: 2px;
    border-top: 2px solid #909090;
}

.canvas {
    display: flex;
    flex: 1;
    min-width: 0;
    padding: 0 98px 0 97px;
    background: #999;
}

.view-scroll {
    width: 15px;
    border-right: none;
    border-top: none;
    border-bottom: none;
}

.view-scroll button {
    height: 14px;
}

.view-scroll .thumb {
    height: 326px;
}

/* Board drawing */
.sheet {
    flex: 1;
    min-width: 0;
    height: 100%;
    background: #fff;
}

.film {
    font: 31px "Liberation Mono", monospace;
    fill: #222;
}

.outline {
    fill: none;
    stroke: #222;
}

.line {
    fill: none;
    stroke: #000;
    stroke-width: 3;
}

.bold {
    stroke-width: 4;
}

.chips {
    fill: #fff;
    stroke: #000;
    stroke-width: 3;
}

.tint {
    fill: #909090;
}

.ghost {
    fill: none;
    stroke: #777;
    stroke-width: 2;
}

.mark {
    font: 24px "Inter", sans-serif;
    fill: #999;
}

.mark .tiny {
    font-size: 18px;
}

.mark .large {
    font-size: 30px;
}

.ink {
    font: 17px "Inter", sans-serif;
}

.part {
    font: 60px "Inter", sans-serif;
}

/* Status bar */
.statusbar {
    display: flex;
    align-items: flex-end;
    justify-content: space-between;
    flex: none;
    height: 20px;
    padding-bottom: 1px;
    background: #436689;
}

.current-file {
    color: #fff;
}
```
